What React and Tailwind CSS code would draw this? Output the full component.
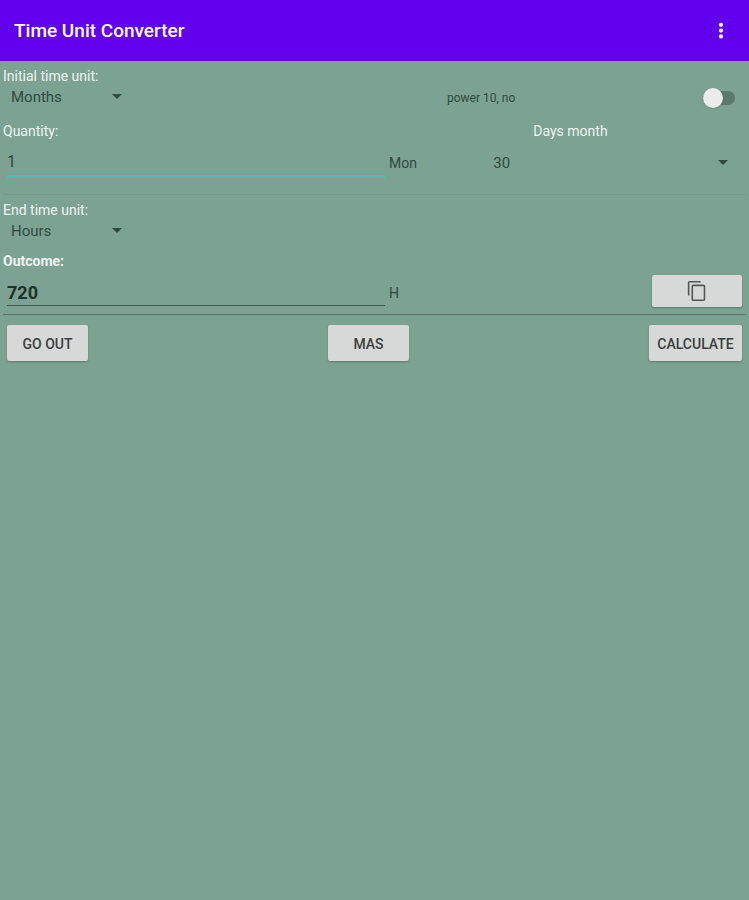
import React, { useState } from 'react';

const units = {
  Hours: { short: 'H', hours: 1 },
  Days: { short: 'D', hours: 24 },
  Months: { short: 'Mon', hours: null },
};

const columns = 'grid grid-cols-[381fr_100fr_260fr]';
const label = 'block h-4 text-sm leading-4 text-[#eef5f1]';
const button = 'h-9 rounded-xs bg-[#d7d9d8] pt-px text-sm font-medium text-[#3a3e3c] shadow-[0_1px_2px_rgba(0,0,0,0.25)] cursor-pointer';

function Dropdown({ id, value, onChange, options, className }) {
  return (
    <div className={`relative h-[26px] ${className}`}>
      <select
        id={id}
        value={value}
        onChange={(e) => onChange(e.target.value)}
        className="h-full w-full appearance-none bg-transparent text-[15px] text-[#2f4a3f] outline-none"
      >
        {options.map((o) => (
          <option key={o}>{o}</option>
        ))}
      </select>
      <svg
        viewBox="0 0 10 5"
        className="pointer-events-none absolute right-[18px] top-[10px] h-[5px] w-[10px] fill-[#2f4a3f]"
      >
        <path d="M0 0h10L5 5z" />
      </svg>
    </div>
  );
}

export default function App() {
  const [from, setFrom] = useState('Months');
  const [to, setTo] = useState('Hours');
  const [quantity, setQuantity] = useState('1');
  const [days, setDays] = useState('30');
  const [power, setPower] = useState(false);
  const [outcome, setOutcome] = useState('720');

  const toHours = (unit) => units[unit].hours ?? Number(days) * 24;

  const calculate = () => {
    const result = (Number(quantity) * toHours(from)) / toHours(to);
    setOutcome(power ? result.toExponential() : String(result));
  };

  const clear = () => {
    setQuantity('');
    setOutcome('');
  };

  return (
    <div className="min-h-screen bg-[#7ca293] font-[Roboto,sans-serif]">
      <header className="flex h-[61px] items-center justify-between bg-[#6200ee] pl-[14px] pr-4 text-white">
        <h1 className="pt-0.5 text-[19px] font-medium">Time Unit Converter</h1>
        <button aria-label="More options" className="cursor-pointer">
          <svg viewBox="0 0 24 24" className="size-6 fill-current">
            <circle cx="12" cy="5.800" r="2.100" />
            <circle cx="12" cy="11.600" r="2.100" />
            <circle cx="12" cy="17.400" r="2.100" />
          </svg>
        </button>
      </header>

      <main className="px-[3px] pt-[7px]">
        {/* Initial unit */}
        <label htmlFor="from" className={label}>Initial time unit:</label>
        <div className={columns}>
          <Dropdown id="from" value={from} onChange={setFrom} options={Object.keys(units)} className="w-[137px] pl-2" />
          <label className="col-span-2 flex items-center justify-between pl-[62px] pr-[11px] pt-0.5 text-xs text-[#2f4a3f]">
            power 10, {power ? 'yes' : 'no'}
            <span className="flex items-center">
              <input
                type="checkbox"
                role="switch"
                checked={power}
                onChange={(e) => setPower(e.target.checked)}
                className="flex h-[14px] w-8 cursor-pointer appearance-none items-center rounded-full bg-[#5c796d] before:size-5 before:shrink-0 before:rounded-full before:bg-[#ececec] before:shadow-sm checked:justify-end"
              />
            </span>
          </label>
        </div>

        {/* Quantity */}
        <div className={`${columns} mt-[13px]`}>
          <label htmlFor="quantity" className={label}>Quantity:</label>
          <label htmlFor="days" className={`${label} col-start-3 pl-12`}>Days month</label>
        </div>
        <div className={columns}>
          <input
            id="quantity"
            inputMode="decimal"
            value={quantity}
            onChange={(e) => setQuantity(e.target.value)}
            className="ml-1 h-[39px] min-w-0 border-b-3 border-[#42c4ae] pt-2 text-base text-[#2f4a3f] outline-none"
          />
          <span className="pl-1 pt-[14px] text-sm leading-5 text-[#2f4a3f]">{units[from].short}</span>
          <Dropdown id="days" value={days} onChange={setDays} options={['28', '29', '30', '31']} className="mt-[11px] pl-2" />
        </div>

        <hr className="mt-4 border-[#73998a]" />

        {/* End unit */}
        <label htmlFor="to" className={`${label} mt-[7px]`}>End time unit:</label>
        <Dropdown id="to" value={to} onChange={setTo} options={Object.keys(units)} className="w-[137px] pl-2" />

        {/* Outcome */}
        <label htmlFor="outcome" className={`${label} mt-[9px] font-bold`}>Outcome:</label>
        <div className={columns}>
          <input
            id="outcome"
            readOnly
            value={outcome}
            className="ml-1 h-[37px] min-w-0 border-b border-[#41594f] pt-[10px] text-lg font-bold text-[#1d3228] outline-none"
          />
          <span className="pl-1 pt-[14px] text-sm leading-5 text-[#2f4a3f]">{units[to].short}</span>
          <button
            aria-label="Copy outcome"
            onClick={() => navigator.clipboard?.writeText(outcome)}
            className="mr-1 mt-[6px] flex h-8 w-[90px] cursor-pointer items-center justify-center justify-self-end rounded-xs bg-[#d7d9d8] text-[#505452] shadow-[0_1px_2px_rgba(0,0,0,0.25)]"
          >
            <svg viewBox="0 0 24 24" className="size-[22px] fill-current">
              <path d="M16 1H4C2.900 1 2 1.900 2 3v14h1.700V2.700H16zM19 5H8C6.900 5 6 5.900 6 7v14c0 1.100.9 2 2 2h11c1.100 0 2-.9 2-2V7c0-1.100-.9-2-2-2zm.3 16.300H7.700V6.700h11.600z" />
            </svg>
          </button>
        </div>

        <hr className="mt-[7px] border-[#5d6f67]" />

        <div className="mt-[10px] flex justify-between px-1">
          <button className={`${button} w-[81px]`} onClick={clear}>GO OUT</button>
          <button className={`${button} w-[81px]`}>MAS</button>
          <button className={`${button} w-[93px]`} onClick={calculate}>CALCULATE</button>
        </div>
      </main>
    </div>
  );
}
